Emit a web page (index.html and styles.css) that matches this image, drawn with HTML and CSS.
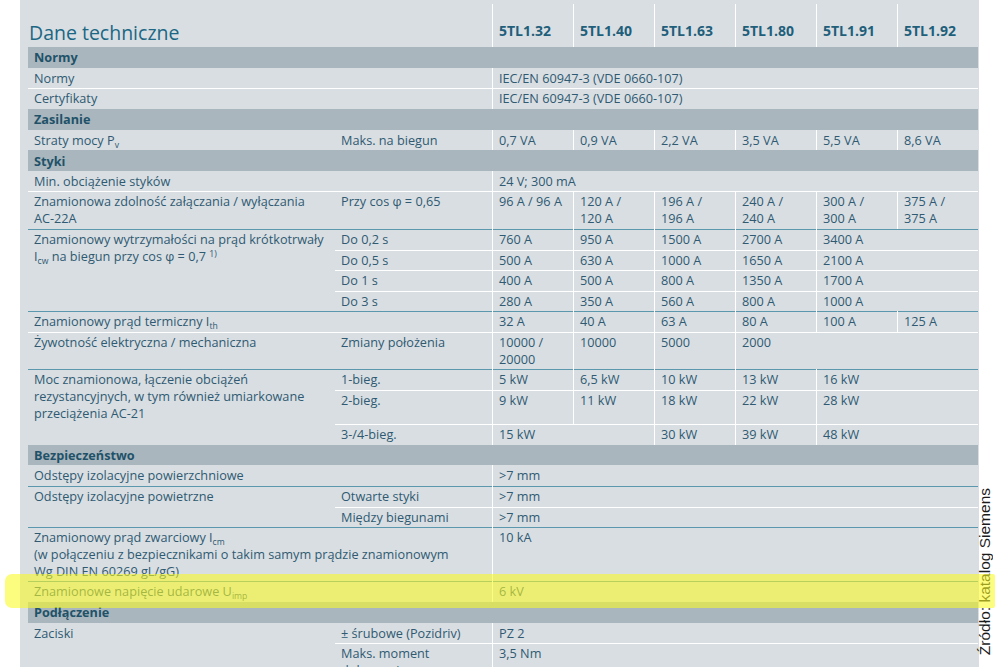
FILE: index.html
```html
<!DOCTYPE html>
<html lang="pl">
<head>
<meta charset="utf-8">
<title>Dane techniczne</title>
<link rel="stylesheet" href="styles.css">
</head>
<body>
<div class="page">
  <div class="sheet">
    <table class="spec">
      <colgroup>
        <col class="c-label"><col class="c-sub">
        <col class="c-val"><col class="c-val"><col class="c-val"><col class="c-val"><col class="c-val"><col class="c-val">
      </colgroup>
      <tr class="head">
        <td colspan="2" class="title">Dane techniczne</td>
        <td class="v">5TL1.32</td><td class="v">5TL1.40</td><td class="v">5TL1.63</td><td class="v">5TL1.80</td><td class="v">5TL1.91</td><td class="v">5TL1.92</td>
      </tr>

      <tr class="sec"><td colspan="8">Normy</td></tr>
      <tr><td colspan="2">Normy</td><td class="v" colspan="6">IEC/EN 60947-3 (VDE 0660-107)</td></tr>
      <tr class="w"><td colspan="2">Certyfikaty</td><td class="v" colspan="6">IEC/EN 60947-3 (VDE 0660-107)</td></tr>

      <tr class="sec"><td colspan="8">Zasilanie</td></tr>
      <tr><td>Straty mocy P<sub>v</sub></td><td>Maks. na biegun</td><td class="v">0,7 VA</td><td class="v">0,9 VA</td><td class="v">2,2 VA</td><td class="v">3,5 VA</td><td class="v">5,5 VA</td><td class="v">8,6 VA</td></tr>

      <tr class="sec"><td colspan="8">Styki</td></tr>
      <tr><td colspan="2">Min. obciążenie styków</td><td class="v" colspan="6">24 V; 300 mA</td></tr>
      <tr class="w"><td>Znamionowa zdolność załączania / wyłączania<br>AC-22A</td><td>Przy cos φ = 0,65</td><td class="v">96 A / 96 A</td><td class="v">120 A /<br>120 A</td><td class="v">196 A /<br>196 A</td><td class="v">240 A /<br>240 A</td><td class="v">300 A /<br>300 A</td><td class="v">375 A /<br>375 A</td></tr>
      <tr class="t"><td rowspan="4">Znamionowy wytrzymałości na prąd krótkotrwały<br>I<sub>cw</sub> na biegun przy cos φ = 0,7 <sup>1)</sup></td><td>Do 0,2 s</td><td class="v">760 A</td><td class="v">950 A</td><td class="v">1500 A</td><td class="v">2700 A</td><td class="v" colspan="2">3400 A</td></tr>
      <tr class="w"><td>Do 0,5 s</td><td class="v">500 A</td><td class="v">630 A</td><td class="v">1000 A</td><td class="v">1650 A</td><td class="v" colspan="2">2100 A</td></tr>
      <tr class="w"><td>Do 1 s</td><td class="v">400 A</td><td class="v">500 A</td><td class="v">800 A</td><td class="v">1350 A</td><td class="v" colspan="2">1700 A</td></tr>
      <tr class="w"><td>Do 3 s</td><td class="v">280 A</td><td class="v">350 A</td><td class="v">560 A</td><td class="v">800 A</td><td class="v" colspan="2">1000 A</td></tr>
      <tr class="t"><td colspan="2">Znamionowy prąd termiczny I<sub>th</sub></td><td class="v">32 A</td><td class="v">40 A</td><td class="v">63 A</td><td class="v">80 A</td><td class="v">100 A</td><td class="v">125 A</td></tr>
      <tr class="w"><td>Żywotność elektryczna / mechaniczna</td><td>Zmiany położenia</td><td class="v">10000 /<br>20000</td><td class="v">10000</td><td class="v">5000</td><td class="v" colspan="3">2000</td></tr>
      <tr class="t single"><td rowspan="2">Moc znamionowa, łączenie obciążeń<br>rezystancyjnych, w tym również umiarkowane<br>przeciążenia AC-21</td><td>1-bieg.</td><td class="v">5 kW</td><td class="v">6,5 kW</td><td class="v">10 kW</td><td class="v">13 kW</td><td class="v" colspan="2">16 kW</td></tr>
      <tr class="w tall"><td>2-bieg.</td><td class="v">9 kW</td><td class="v">11 kW</td><td class="v">18 kW</td><td class="v">22 kW</td><td class="v" colspan="2">28 kW</td></tr>
      <tr class="w"><td class="blank"></td><td>3-/4-bieg.</td><td class="v" colspan="2">15 kW</td><td class="v">30 kW</td><td class="v">39 kW</td><td class="v" colspan="2">48 kW</td></tr>

      <tr class="sec"><td colspan="8">Bezpieczeństwo</td></tr>
      <tr><td colspan="2">Odstępy izolacyjne powierzchniowe</td><td class="v" colspan="6">&gt;7 mm</td></tr>
      <tr class="t"><td rowspan="2">Odstępy izolacyjne powietrzne</td><td>Otwarte styki</td><td class="v" colspan="6">&gt;7 mm</td></tr>
      <tr class="w"><td>Między biegunami</td><td class="v" colspan="6">&gt;7 mm</td></tr>
      <tr class="t"><td colspan="2" class="nowrap">Znamionowy prąd zwarciowy I<sub>cm</sub><br>(w połączeniu z bezpiecznikami o takim samym prądzie znamionowym<br>Wg DIN EN 60269 gL/gG)</td><td class="v" colspan="6">10 kA</td></tr>
      <tr class="t"><td colspan="2">Znamionowe napięcie udarowe U<sub>imp</sub></td><td class="v" colspan="6">6 kV</td></tr>

      <tr class="sec"><td colspan="8">Podłączenie</td></tr>
      <tr><td rowspan="2">Zaciski</td><td>± śrubowe (Pozidriv)</td><td class="v" colspan="6">PZ 2</td></tr>
      <tr class="w"><td>Maks. moment<br>dokręcania</td><td class="v" colspan="6">3,5 Nm</td></tr>
    </table>
    <div class="marker" aria-hidden="true"></div>
  </div>
  <div class="source">Źródło: katalog Siemens</div>
</div>
</body>
</html>
```

FILE: styles.css
```css
* { box-sizing: border-box; }
html, body { margin: 0; padding: 0; background: #ffffff; }
body { font-family: "Open Sans", "Noto Sans", sans-serif; }

.page {
  display: flex;
  height: 667px;
  overflow: hidden;
}

.sheet {
  position: relative;
  width: 959px;
  margin-left: 20px;
  padding: 4px 1px 0 8px;
  background: #d9dee3;
  flex: none;
}

.spec {
  width: 950px;
  table-layout: fixed;
  border-collapse: separate;
  border-spacing: 0;
  font-size: 12.7px;
  line-height: 16.75px;
  color: #2f5a71;
}
.c-label { width: 307px; }
.c-sub { width: 157px; }
.c-val { width: 81px; }

.spec td {
  padding: 2px 6px 1.9px 6px;
  vertical-align: top;
  text-align: left;
}
.spec td.v {
  border-left: 1px solid #ffffff;
  white-space: nowrap;
}
.nowrap { white-space: nowrap; }

.spec tr.single td:not([rowspan]) { height: 20.65px; }
.spec tr.tall td { height: 34px; }

.spec tr.w td:not(.blank) {
  background: linear-gradient(#ffffff, #ffffff) top left / 100% 1px no-repeat;
}
.spec tr.t td:not(.blank) {
  background: linear-gradient(#5b97ad, #5b97ad) top left / 100% 1px no-repeat;
}

.spec tr.head td {
  height: 43px;
  vertical-align: bottom;
  padding-bottom: 8px;
  font-size: 14px;
  line-height: 17px;
  font-weight: 700;
  color: #1f5f7a;
}
.spec tr.head td.title {
  padding: 0 0 3px 1px;
  font-size: 19.5px;
  line-height: 22px;
  font-weight: 500;
  color: #1b6784;
}

.spec tr.sec td {
  background: #aab6bd;
  font-weight: 700;
  color: #1f5269;
  padding-top: 2.4px;
  padding-bottom: 1.5px;
}

sub, sup {
  font-size: 68%;
  line-height: 0;
}
sub { vertical-align: -0.3em; }
sup { vertical-align: 0.45em; }

.marker {
  position: absolute;
  left: -15px;
  top: 574px;
  width: 990px;
  height: 34px;
  border-radius: 7px 2px 2px 7px;
  background: rgba(250, 250, 35, 0.58);
  z-index: 2;
}

.source {
  flex: none;
  align-self: flex-end;
  margin: 0 0 12px -2px;
  writing-mode: vertical-rl;
  transform: rotate(180deg);
  font-family: "Liberation Sans", Arial, sans-serif;
  font-size: 15.5px;
  line-height: 16px;
  color: #1b1b1b;
  white-space: nowrap;
}
```
